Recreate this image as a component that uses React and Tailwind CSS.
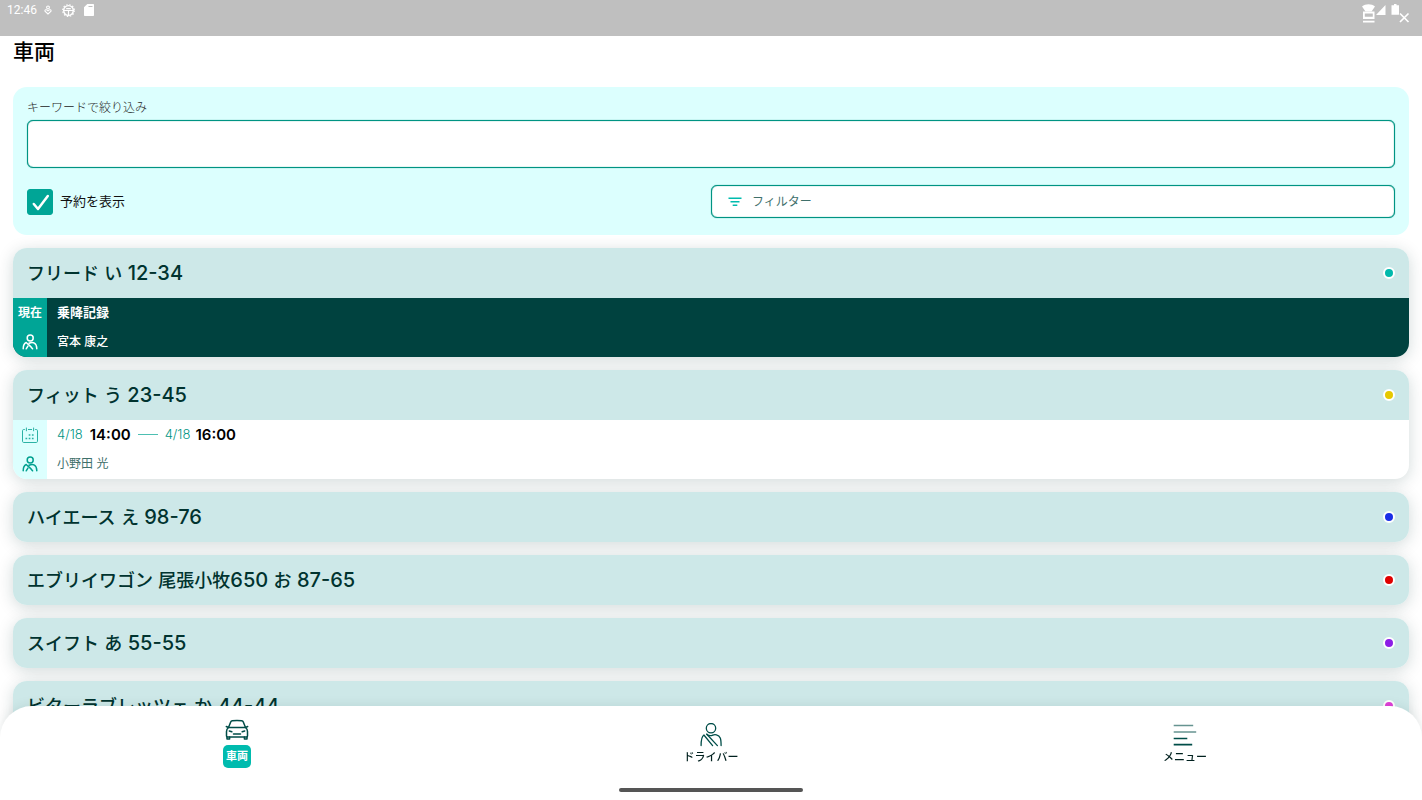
import { useState } from 'react'

const VEHICLES = [
  {
    name: 'フリード い 12-34',
    dot: 'bg-[#00b9ac]',
    current: { title: '乗降記録', driver: '宮本 康之' }
  },
  {
    name: 'フィット う 23-45',
    dot: 'bg-[#e6c800]',
    booking: { fromDate: '4/18', from: '14:00', toDate: '4/18', to: '16:00', driver: '小野田 光' }
  },
  { name: 'ハイエース え 98-76', dot: 'bg-[#1a2ee6]' },
  { name: 'エブリイワゴン 尾張小牧650 お 87-65', dot: 'bg-[#e00000]' },
  { name: 'スイフト あ 55-55', dot: 'bg-[#8c1ee6]' },
  { name: 'ビターラブレッツェ か 44-44', dot: 'bg-[#e040d8]' }
]

function DriverIcon({ className }) {
  return (
    <svg viewBox="0 0 16 16" className={className} fill="none" stroke="currentColor" strokeWidth="1.5" strokeLinecap="round" strokeLinejoin="round">
      <circle cx="8.2" cy="4" r="3" />
      <path d="M1.200 14.800c0-3.400.9-5.500 3-6.300 2.200 2 4.800 3.700 6.400 6.300" />
      <path d="M7 9.300c4-1.900 7.800-.6 7.800 5.500M4.200 14.800l1.700-2.700" />
    </svg>
  )
}

function DriverNavIcon() {
  return (
    <svg viewBox="0 0 24 24" className="h-6 w-6" fill="none" stroke="currentColor" strokeWidth="1.300" strokeLinecap="round" strokeLinejoin="round">
      <circle cx="12" cy="5.200" r="4.700" />
      <path d="M2.100 22.600c0-5.800.6-9.200 2.800-10.600L13.600 22.600" />
      <path d="M7.800 11.200c1.800 1.700 4 1.800 6 .9 1.300-.6 2.200-.7 3.600-.3 4 1.100 4.700 3.700 4.700 10.800" />
      <path d="M7.800 11.200 18.400 22.600" />
    </svg>
  )
}

function CarIcon() {
  return (
    <svg viewBox="0 0 24 24" className="h-6 w-6" fill="none" stroke="currentColor" strokeWidth="1.500" strokeLinecap="round" strokeLinejoin="round">
      <path d="M3.500 9.500 5.700 4c.3-.8.8-1.200 1.600-1.300 3.100-.4 6.300-.4 9.400 0 .8.1 1.300.5 1.600 1.300l2.200 5.500" />
      <path d="M3.500 9.500h17c1.400 1 2 2.200 2 4V18c0 .6-.3.900-.9.900H2.400c-.6 0-.9-.3-.9-.9v-4.500c0-1.800.6-3 2-4zM3.500 9.500l-2.200-1M20.500 9.500l2.200-1" />
      <path d="M2 19v2h2.600v-2M19.400 19v2H22v-2M4.300 13l2.500.8M19.700 13l-2.500.8M8.500 16h7" />
    </svg>
  )
}

function MenuLinesIcon() {
  return (
    <svg viewBox="0 0 24 24" className="h-6 w-6" fill="none" stroke="currentColor" strokeWidth="1.700">
      <path className="opacity-60" d="M.7 2.500h19.500M.7 9h22.500" />
      <path d="M.7 15.500h13.600M.7 21.700h18.500" />
    </svg>
  )
}

function CalendarIcon() {
  return (
    <svg viewBox="0 0 16 16" className="h-4 w-4 opacity-80" fill="none" stroke="currentColor" strokeWidth="1">
      <path d="M2.800 2.500H1.700c-.7 0-1.200.5-1.200 1.200v10.600c0 .7.500 1.200 1.200 1.200h12.600c.7 0 1.200-.5 1.200-1.200V3.700c0-.7-.5-1.200-1.200-1.200h-1.100M6 2.500h4M4.400.6v3.600M11.600.6v3.600" />
      <path strokeWidth="1.500" strokeDasharray="1.700 1.500" d="M6.700 8h6M3.500 11.500h9.200" />
    </svg>
  )
}

function StatusBar() {
  return (
    <header className="flex h-9 shrink-0 items-start justify-between bg-[#bfbfbf] pl-[7px] pr-3 text-white">
      <div className="flex h-5 items-center">
        <span className="font-[Roboto,sans-serif] text-xs">12:46</span>
        <svg viewBox="0 0 10 12" className="ml-[7px] h-3 w-2" fill="none" stroke="currentColor" strokeWidth="1.300">
          <circle cx="5" cy="2.800" r="1.700" />
          <path d="M5 11 1.200 7.500C.6 5.500 3 4.900 5 7c2-2.100 4.400-1.500 3.800.5z" />
        </svg>
        <svg viewBox="0 0 14 14" className="ml-[10px] h-[13px] w-[13px]" fill="none" stroke="currentColor">
          <circle cx="7" cy="7" r="5.200" strokeWidth="1.500" />
          <circle cx="7" cy="7" r="6.300" strokeWidth="1.200" strokeDasharray="1.650 1.650" />
          <path strokeWidth="1.300" d="M2 7h10M7 7v5M4.500 5h5" />
        </svg>
        <svg viewBox="0 0 10 12" className="ml-[9px] h-3 w-[10px]" fill="currentColor">
          <path d="M3.300 0H9c.6 0 1 .4 1 1v10c0 .6-.4 1-1 1H1c-.6 0-1-.4-1-1V3.300z" />
          <path stroke="#bfbfbf" strokeWidth="1" d="M4.500 2.500h4" />
        </svg>
      </div>
      <svg viewBox="0 0 48 24" className="h-6 w-12" fill="currentColor">
        <path d="M0 6.500C3.500 3.500 9.500 3.500 13 6.500L9.500 11.500h-6z" />
        <path fillRule="evenodd" d="M1 11.500h11.500v7.500H1zm1.800 2v3.300h8v-3.300zM1 20.700h11.500v1.800H1z" />
        <path d="M23.500 5v10H14zM32 4h2.500v1.200H37V14.800h-7.500V5.200H32z" />
        <path stroke="#bfbfbf" strokeWidth="3.500" d="m38 13.500 8.500 8.500m0-8.500L38 22" />
        <path fill="none" stroke="currentColor" strokeWidth="1.700" d="m38 13.500 8.500 8.500m0-8.500L38 22" />
      </svg>
    </header>
  )
}

// Digits run one size larger than the kana around them
function PlateName({ text }) {
  return (
    <h2 className="text-lg leading-6 font-medium text-[#00332f]">
      {text.split(/([\d\s-]+)/).map((part, i) =>
        i % 2 ? <span key={i} className="text-xl leading-6">{part}</span> : part
      )}
    </h2>
  )
}

function VehicleCard({ vehicle }) {
  const { name, dot, current, booking } = vehicle

  return (
    <li className="overflow-hidden rounded-[14px] bg-white shadow-[0_3px_16px_rgba(0,50,50,0.18)]">
      <div className="flex h-[50px] items-center justify-between bg-[#cde8e8] px-[14px]">
        <PlateName text={name} />
        <span className={`h-3 w-3 rounded-full border-2 border-white ${dot}`} />
      </div>

      {current && (
        <div className="flex h-[59px] bg-[#00423f] text-white">
          <div className="grid w-[34px] grid-rows-2 place-items-center bg-[#00a596]">
            <span className="text-xs font-bold">現在</span>
            <DriverIcon className="h-4 w-4" />
          </div>
          <div className="grid grid-rows-2 items-center pl-[10px]">
            <p className="text-[13px] font-bold">{current.title}</p>
            <p className="text-xs font-medium">{current.driver}</p>
          </div>
        </div>
      )}

      {booking && (
        <div className="flex h-[59px]">
          <div className="grid w-[34px] grid-rows-2 place-items-center bg-[#dcfffe] text-[#00a08f]">
            <CalendarIcon />
            <DriverIcon className="h-4 w-4" />
          </div>
          <div className="grid grid-rows-2 items-center pl-[10px]">
            <p className="flex items-center text-[13px] text-[#009483]">
              <span className="font-light">{booking.fromDate}</span>
              <span className="ml-[7px] text-[15px] font-semibold text-black">{booking.from}</span>
              <span className="mx-[7px] h-px w-5 bg-[#4dbfb2]" />
              <span className="font-light">{booking.toDate}</span>
              <span className="ml-[5px] text-[15px] font-semibold text-black">{booking.to}</span>
            </p>
            <p className="text-xs text-[#3f706b]">{booking.driver}</p>
          </div>
        </div>
      )}
    </li>
  )
}

function SearchPanel() {
  const [keyword, setKeyword] = useState('')
  const [showBookings, setShowBookings] = useState(true)

  return (
    <section className="mt-[19px] rounded-[14px] bg-[#dcfffe] px-[14px] pt-[13px] pb-[17px]">
      <label htmlFor="keyword" className="block text-xs leading-4 font-light text-[#222]">
        キーワードで絞り込み
      </label>
      <input
        id="keyword"
        type="text"
        value={keyword}
        onChange={(e) => setKeyword(e.target.value)}
        className="mt-1 block h-12 w-full rounded-md border border-[#009483] bg-white px-3 shadow-[0_0_1px_#009483,inset_0_0_1px_#009483]"
      />
      <div className="mt-[17px] grid grid-cols-2 items-center">
        <div className="flex items-center gap-[7px]">
          <span className="relative h-[26px] w-[26px]">
            <input
              id="show-bookings"
              type="checkbox"
              checked={showBookings}
              onChange={(e) => setShowBookings(e.target.checked)}
              className="block h-full w-full appearance-none rounded-[3px] border border-[#00a596] bg-white checked:bg-[#00a596]"
            />
            {showBookings && (
              <svg viewBox="0 0 26 26" className="pointer-events-none absolute inset-0" fill="none" stroke="white" strokeWidth="2.500" strokeLinecap="round" strokeLinejoin="round">
                <path d="m6.800 15 4.200 5 9.800-13" />
              </svg>
            )}
          </span>
          <label htmlFor="show-bookings" className="text-[13px] text-[#111]">予約を表示</label>
        </div>
        <button
          type="button"
          className="flex h-[33px] items-center gap-[10px] rounded-md border border-[#009483] bg-white px-4 text-xs text-[#3f706b] shadow-[0_0_1px_#009483,inset_0_0_1px_#009483]"
        >
          <svg viewBox="0 0 14 10" className="h-[10px] w-[14px]" fill="none" stroke="#00bbae" strokeWidth="1.400">
            <path d="M.5 1.200h13M2.500 4.700h9M4.700 8.200h4.600" />
          </svg>
          フィルター
        </button>
      </div>
    </section>
  )
}

function BottomNav() {
  return (
    <nav className="fixed inset-x-0 bottom-0 h-[94px] rounded-t-[32px] bg-white text-[#004d48] shadow-[0_0_12px_rgba(0,50,50,0.1)]">
      <div className="grid grid-cols-3">
        <a href="#vehicles" className="flex flex-col items-center gap-[3px] pt-3">
          <CarIcon />
          <span className="flex h-[23px] w-7 items-center justify-center rounded-[5px] bg-[#00bbae] text-[11px] font-bold text-white">車両</span>
        </a>
        <a href="#drivers" className="flex flex-col items-center gap-[2px] pt-[17px]">
          <DriverNavIcon />
          <span className="text-[11px] leading-4 font-medium text-[#00201e]">ドライバー</span>
        </a>
        <a href="#menu" className="flex flex-col items-center gap-[2px] pt-[17px]">
          <MenuLinesIcon />
          <span className="text-[11px] leading-4 font-medium text-[#00201e]">メニュー</span>
        </a>
      </div>
      <span className="absolute bottom-2 left-1/2 h-1 w-[184px] -translate-x-1/2 rounded-full bg-[#555]" />
    </nav>
  )
}

export default function App() {
  return (
    <div className="flex h-screen flex-col bg-white font-[Inter,'Noto_Sans_CJK_JP',sans-serif]">
      <StatusBar />
      <main className="min-h-0 flex-1 overflow-y-auto px-[13px] pb-28 [scrollbar-width:none]">
        <h1 className="text-[21px] leading-8 font-medium text-black">車両</h1>
        <SearchPanel />
        <ul className="mt-[13px] flex flex-col gap-[13px]">
          {VEHICLES.map((vehicle) => (
            <VehicleCard key={vehicle.name} vehicle={vehicle} />
          ))}
        </ul>
      </main>
      <BottomNav />
    </div>
  )
}
